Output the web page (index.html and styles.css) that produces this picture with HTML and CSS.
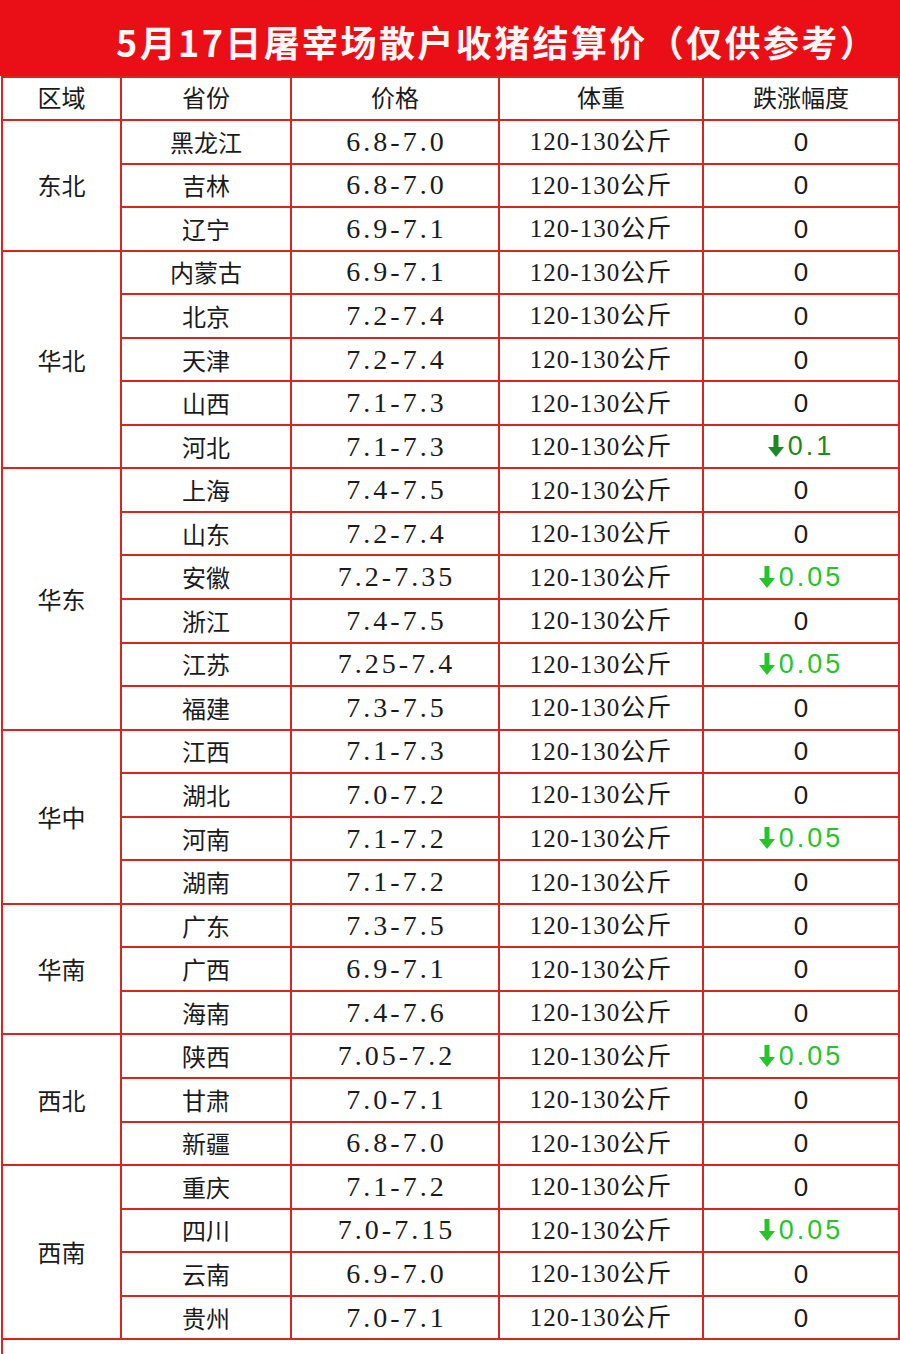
FILE: index.html
```html
<!DOCTYPE html>
<html lang="zh-CN">
<head>
<meta charset="utf-8">
<title>5月17日屠宰场散户收猪结算价</title>
<link rel="stylesheet" href="styles.css">
</head>
<body>
<div class="page">
  <div class="title-bar"><h1 class="title">5月17日屠宰场散户收猪结算价（仅供参考）</h1></div>
  <table class="price-table">
    <colgroup>
      <col class="c-region"><col class="c-prov"><col class="c-price"><col class="c-weight"><col class="c-change">
    </colgroup>
    <thead>
      <tr class="head-row"><th>区域</th><th>省份</th><th>价格</th><th>体重</th><th>跌涨幅度</th></tr>
    </thead>
    <tbody>
      <tr><td class="region" rowspan="3">东北</td><td class="prov">黑龙江</td><td class="price">6.8-7.0</td><td class="weight">120-130公斤</td><td class="change">0</td></tr>
      <tr><td class="prov">吉林</td><td class="price">6.8-7.0</td><td class="weight">120-130公斤</td><td class="change">0</td></tr>
      <tr><td class="prov">辽宁</td><td class="price">6.9-7.1</td><td class="weight">120-130公斤</td><td class="change">0</td></tr>

      <tr><td class="region" rowspan="5">华北</td><td class="prov">内蒙古</td><td class="price">6.9-7.1</td><td class="weight">120-130公斤</td><td class="change">0</td></tr>
      <tr><td class="prov">北京</td><td class="price">7.2-7.4</td><td class="weight">120-130公斤</td><td class="change">0</td></tr>
      <tr><td class="prov">天津</td><td class="price">7.2-7.4</td><td class="weight">120-130公斤</td><td class="change">0</td></tr>
      <tr><td class="prov">山西</td><td class="price">7.1-7.3</td><td class="weight">120-130公斤</td><td class="change">0</td></tr>
      <tr><td class="prov">河北</td><td class="price">7.1-7.3</td><td class="weight">120-130公斤</td><td class="change down dark"><svg class="arrow" viewBox="0 0 16 22"><path d="M5.5 0h5v12h5.5l-8 10-8-10h5.5z"/></svg><span class="num">0.1</span></td></tr>

      <tr><td class="region" rowspan="6">华东</td><td class="prov">上海</td><td class="price">7.4-7.5</td><td class="weight">120-130公斤</td><td class="change">0</td></tr>
      <tr><td class="prov">山东</td><td class="price">7.2-7.4</td><td class="weight">120-130公斤</td><td class="change">0</td></tr>
      <tr><td class="prov">安徽</td><td class="price">7.2-7.35</td><td class="weight">120-130公斤</td><td class="change down"><svg class="arrow" viewBox="0 0 16 22"><path d="M5.5 0h5v12h5.5l-8 10-8-10h5.5z"/></svg><span class="num">0.05</span></td></tr>
      <tr><td class="prov">浙江</td><td class="price">7.4-7.5</td><td class="weight">120-130公斤</td><td class="change">0</td></tr>
      <tr><td class="prov">江苏</td><td class="price">7.25-7.4</td><td class="weight">120-130公斤</td><td class="change down"><svg class="arrow" viewBox="0 0 16 22"><path d="M5.5 0h5v12h5.5l-8 10-8-10h5.5z"/></svg><span class="num">0.05</span></td></tr>
      <tr><td class="prov">福建</td><td class="price">7.3-7.5</td><td class="weight">120-130公斤</td><td class="change">0</td></tr>

      <tr><td class="region" rowspan="4">华中</td><td class="prov">江西</td><td class="price">7.1-7.3</td><td class="weight">120-130公斤</td><td class="change">0</td></tr>
      <tr><td class="prov">湖北</td><td class="price">7.0-7.2</td><td class="weight">120-130公斤</td><td class="change">0</td></tr>
      <tr><td class="prov">河南</td><td class="price">7.1-7.2</td><td class="weight">120-130公斤</td><td class="change down"><svg class="arrow" viewBox="0 0 16 22"><path d="M5.5 0h5v12h5.5l-8 10-8-10h5.5z"/></svg><span class="num">0.05</span></td></tr>
      <tr><td class="prov">湖南</td><td class="price">7.1-7.2</td><td class="weight">120-130公斤</td><td class="change">0</td></tr>

      <tr><td class="region" rowspan="3">华南</td><td class="prov">广东</td><td class="price">7.3-7.5</td><td class="weight">120-130公斤</td><td class="change">0</td></tr>
      <tr><td class="prov">广西</td><td class="price">6.9-7.1</td><td class="weight">120-130公斤</td><td class="change">0</td></tr>
      <tr><td class="prov">海南</td><td class="price">7.4-7.6</td><td class="weight">120-130公斤</td><td class="change">0</td></tr>

      <tr><td class="region" rowspan="3">西北</td><td class="prov">陕西</td><td class="price">7.05-7.2</td><td class="weight">120-130公斤</td><td class="change down"><svg class="arrow" viewBox="0 0 16 22"><path d="M5.5 0h5v12h5.5l-8 10-8-10h5.5z"/></svg><span class="num">0.05</span></td></tr>
      <tr><td class="prov">甘肃</td><td class="price">7.0-7.1</td><td class="weight">120-130公斤</td><td class="change">0</td></tr>
      <tr><td class="prov">新疆</td><td class="price">6.8-7.0</td><td class="weight">120-130公斤</td><td class="change">0</td></tr>

      <tr><td class="region" rowspan="4">西南</td><td class="prov">重庆</td><td class="price">7.1-7.2</td><td class="weight">120-130公斤</td><td class="change">0</td></tr>
      <tr><td class="prov">四川</td><td class="price">7.0-7.15</td><td class="weight">120-130公斤</td><td class="change down"><svg class="arrow" viewBox="0 0 16 22"><path d="M5.5 0h5v12h5.5l-8 10-8-10h5.5z"/></svg><span class="num">0.05</span></td></tr>
      <tr><td class="prov">云南</td><td class="price">6.9-7.0</td><td class="weight">120-130公斤</td><td class="change">0</td></tr>
      <tr><td class="prov">贵州</td><td class="price">7.0-7.1</td><td class="weight">120-130公斤</td><td class="change">0</td></tr>
    </tbody>
  </table>
  <div class="footer"></div>
</div>
</body>
</html>
```
FILE: styles.css
```css
html, body {
  margin: 0;
  padding: 0;
  background: #ffffff;
}
.page {
  width: 900px;
  height: 1354px;
  overflow: hidden;
  display: flex;
  flex-direction: column;
}
.title-bar {
  height: 76px;
  background: #ea0f16;
  display: flex;
  align-items: center;
  box-sizing: border-box;
  padding: 6px 0 0 116px;
  flex: none;
}
.title {
  margin: 0;
  font-family: "Noto Sans CJK SC", "Noto Sans", sans-serif;
  font-weight: 700;
  font-size: 36px;
  line-height: 1;
  letter-spacing: 2.4px;
  color: #fff7f5;
  white-space: nowrap;
}
.price-table {
  border-collapse: collapse;
  table-layout: fixed;
  width: 897px;
  margin-left: 1px;
  flex: none;
  color: #1b1b1b;
  font-family: "Noto Sans CJK SC", sans-serif;
}
.c-region { width: 119px; }
.c-prov { width: 170px; }
.c-price { width: 208px; }
.c-weight { width: 204px; }
.c-change { width: 196px; }
.price-table th,
.price-table td {
  border: 2px solid #d7261d;
  padding: 0;
  text-align: center;
  vertical-align: middle;
  white-space: nowrap;
  background: #ffffff;
}
.head-row {
  height: 43px;
}
.price-table th {
  font-weight: 400;
  font-size: 24px;
  line-height: 1;
  padding-bottom: 3px;
}
.price-table tbody tr {
  height: 43.56px;
}
.region {
  font-size: 24px;
  line-height: 1;
}
.prov {
  font-size: 24px;
  line-height: 1;
}
.price {
  font-family: "Liberation Serif", "Noto Sans CJK SC", serif;
  font-size: 28px;
  letter-spacing: 3px;
  line-height: 1;
  padding-left: 3px !important;
}
.weight {
  font-family: "Liberation Serif", "Noto Sans CJK SC", serif;
  font-size: 25px;
  letter-spacing: 1px;
  line-height: 1;
}
.change {
  font-family: "Liberation Sans", sans-serif;
  font-size: 26px;
  line-height: 1;
}
.change.down {
  color: #25c52a;
  font-size: 27px;
}
.change.dark {
  color: #1b8a22;
}
.arrow {
  width: 16px;
  height: 22px;
  fill: currentColor;
  vertical-align: -2px;
  margin-right: 4px;
}
.num {
  letter-spacing: 3px;
}
.footer {
  flex: 1;
  margin-left: 1px;
  border-left: 2px solid #d7261d;
}
```
